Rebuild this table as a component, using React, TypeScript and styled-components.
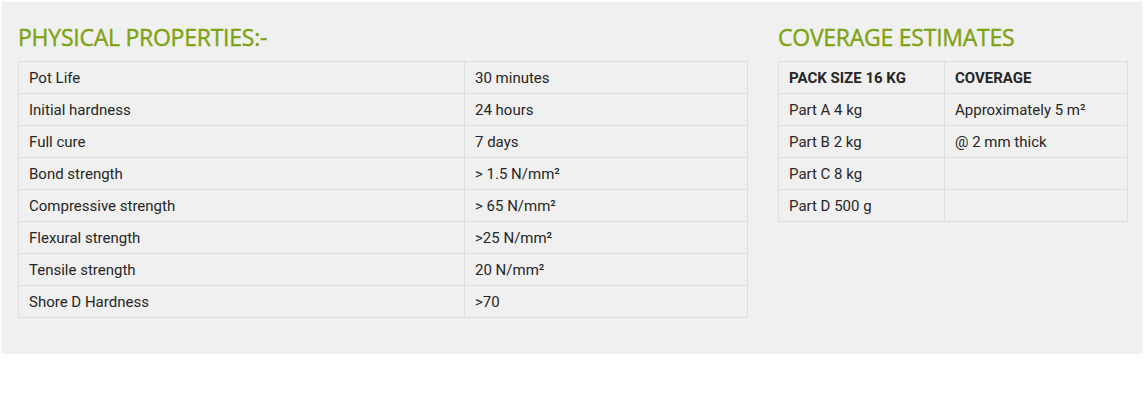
import React from "react";
import styled, { createGlobalStyle } from "styled-components";

const Global = createGlobalStyle`
  html, body { margin: 0; padding: 0; background: #ffffff; }
  body { font-family: Roboto, "Liberation Sans", Arial, sans-serif; }
`;

const Panel = styled.section`
  margin: 2px 2px 0 2px;
  background: #f0f0f0;
  box-shadow: 0 3px 7px rgba(0, 0, 0, 0.06);
  display: flex;
  align-items: flex-start;
  gap: 30px;
  padding: 20px 15px 36px 16px;
`;

const Column = styled.div<{ $width: number }>`
  width: ${(p) => p.$width}px;
  flex: none;
  display: flex;
  flex-direction: column;
`;

const Heading = styled.h2`
  margin: 0 0 9px 0;
  font-family: "Open Sans", "Liberation Sans", sans-serif;
  font-weight: 400;
  font-size: 23px;
  line-height: 30px;
  color: #7ea312;
  letter-spacing: -0.25px;
  -webkit-text-stroke: 0.4px #7ea312;
`;

const Table = styled.table`
  width: 100%;
  border-collapse: collapse;
  table-layout: fixed;
`;

const Cell = styled.td<{ $head?: boolean; $width?: number }>`
  border: 1px solid #dddddd;
  height: 32px;
  padding: 0 10px;
  font-family: Roboto, "Liberation Sans", Arial, sans-serif;
  font-size: 15px;
  color: #262626;
  font-weight: ${(p) => (p.$head ? 700 : 400)};
  vertical-align: middle;
  box-sizing: border-box;
  ${(p) => (p.$width ? `width: ${p.$width}px;` : "")}
`;

const props: [string, string][] = [
  ["Pot Life", "30 minutes"],
  ["Initial hardness", "24 hours"],
  ["Full cure", "7 days"],
  ["Bond strength", "> 1.5 N/mm²"],
  ["Compressive strength", "> 65 N/mm²"],
  ["Flexural strength", ">25 N/mm²"],
  ["Tensile strength", "20 N/mm²"],
  ["Shore D Hardness", ">70"],
];

const coverage: [string, string][] = [
  ["Part A 4 kg", "Approximately 5 m²"],
  ["Part B 2 kg", "@ 2 mm thick"],
  ["Part C 8 kg", ""],
  ["Part D 500 g", ""],
];

export default function App() {
  return (
    <>
      <Global />
      <Panel>
        <Column $width={730}>
          <Heading>PHYSICAL PROPERTIES:-</Heading>
          <Table>
            <tbody>
              {props.map(([k, v], i) => (
                <tr key={k}>
                  <Cell $width={i === 0 ? 446 : undefined}>{k}</Cell>
                  <Cell>{v}</Cell>
                </tr>
              ))}
            </tbody>
          </Table>
        </Column>
        <Column $width={350}>
          <Heading>COVERAGE ESTIMATES</Heading>
          <Table>
            <tbody>
              <tr>
                <Cell $head $width={166}>PACK SIZE 16 KG</Cell>
                <Cell $head>COVERAGE</Cell>
              </tr>
              {coverage.map(([k, v]) => (
                <tr key={k}>
                  <Cell>{k}</Cell>
                  <Cell>{v}</Cell>
                </tr>
              ))}
            </tbody>
          </Table>
        </Column>
      </Panel>
    </>
  );
}
